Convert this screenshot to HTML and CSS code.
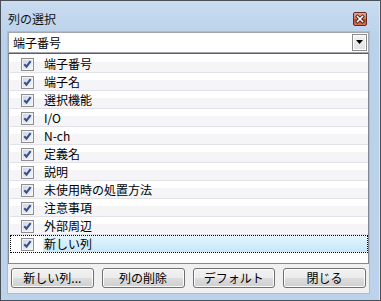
FILE: index.html
```html
<!DOCTYPE html>
<html lang="ja">
<head>
    <meta charset="UTF-8">
    <title>列の選択</title>
    <link rel="stylesheet" href="styles.css">
</head>
<body>
    <div class="window">
        <div class="titlebar">
            <span class="title">列の選択</span>
            <span class="close">
                <svg width="14" height="14" viewBox="0 0 14 14">
                    <path d="M4.5 4.5 L9.5 9.5 M9.5 4.5 L4.5 9.5" stroke="#3a1a14" stroke-width="3.2" stroke-linecap="square"/>
                    <path d="M4.5 4.5 L9.5 9.5 M9.5 4.5 L4.5 9.5" stroke="#fff" stroke-width="1.6" stroke-linecap="square"/>
                </svg>
            </span>
        </div>

        <div class="client">
            <div class="combo">
                <span class="combo-text">端子番号</span>
                <span class="drop">
                    <svg width="8" height="5" viewBox="0 0 8 5"><path d="M0 0 H7 L3.5 4 Z" fill="#000"/></svg>
                </span>
            </div>

            <ul class="list">
                <li class="row"><span class="check"></span><span class="label">端子番号</span></li>
                <li class="row"><span class="check"></span><span class="label">端子名</span></li>
                <li class="row"><span class="check"></span><span class="label">選択機能</span></li>
                <li class="row"><span class="check"></span><span class="label">I/O</span></li>
                <li class="row"><span class="check"></span><span class="label">N-ch</span></li>
                <li class="row"><span class="check"></span><span class="label">定義名</span></li>
                <li class="row"><span class="check"></span><span class="label">説明</span></li>
                <li class="row"><span class="check"></span><span class="label">未使用時の処置方法</span></li>
                <li class="row"><span class="check"></span><span class="label">注意事項</span></li>
                <li class="row"><span class="check"></span><span class="label">外部周辺</span></li>
                <li class="row selected"><span class="check"></span><span class="label">新しい列</span></li>
            </ul>

            <div class="buttons">
                <button class="btn">新しい列...</button>
                <button class="btn">列の削除</button>
                <button class="btn">デフォルト</button>
                <button class="btn">閉じる</button>
            </div>
        </div>
    </div>
</body>
</html>
```

FILE: styles.css
```css
body {
    margin: 0;
    font-family: "Noto Sans CJK JP", "Liberation Sans", sans-serif;
    font-size: 12px;
    color: #000;
}
.window {
    width: 381px;
    height: 301px;
    box-sizing: border-box;
    border: 1px solid #4a4f57;
    background: linear-gradient(#c9dcf0, #b9d1ea 40px, #bdd3eb);
    box-shadow: inset -4px 0 0 -3px #d8e6f5;
}
.titlebar {
    height: 30px;
    display: flex;
    justify-content: space-between;
    align-items: flex-start;
}
.title {
    padding: 11px 0 0 7px;
    line-height: 14px;
    color: #111;
}
.close {
    margin: 11px 13px 0 0;
    width: 14px;
    height: 14px;
    box-sizing: border-box;
    border: 1px solid #6b2a1f;
    border-radius: 2px;
    background: linear-gradient(#e7a796, #d5725c 50%, #c2452c 51%, #d4704f);
    display: flex;
    align-items: center;
    justify-content: center;
}
.close svg {
    margin: -1px;
}
.client {
    margin: 0 11px 0 7px;
    height: 261px;
    background: #f0f0f0;
    box-shadow: 0 0 0 1px #a7bdd6;
}
.combo {
    margin-top: 1px;
    height: 21px;
    box-sizing: border-box;
    border: 1px solid #a3a6ad;
    background: #fff;
    display: flex;
    align-items: center;
    justify-content: space-between;
}
.combo-text {
    padding-left: 4px;
    line-height: 14px;
}
.drop {
    margin-right: 1px;
    width: 15px;
    height: 17px;
    box-sizing: border-box;
    border: 1px solid #8a8a8a;
    box-shadow: inset 0 0 0 1px #fff;
    background: linear-gradient(#f4f4f4, #e2e2e2);
    display: flex;
    align-items: center;
    justify-content: center;
}
.list {
    list-style: none;
    margin: 0;
    height: 211px;
    box-sizing: border-box;
    padding: 1px 0 10px 1px;
    border: 1px solid #828790;
    border-top-color: #5b5e63;
    background: #fff;
}
.row {
    height: 18px;
    box-sizing: border-box;
    display: flex;
    align-items: stretch;
    border-bottom: 1px solid #e2e1ea;
    background: linear-gradient(#fff 7px, #f5f5f7 7px);
}
.check {
    margin: 3px 9px 0 11px;
    width: 13px;
    height: 13px;
    box-sizing: border-box;
    border: 1px solid #8f8f8f;
    background:
        url("data:image/svg+xml,%3Csvg xmlns='http://www.w3.org/2000/svg' width='11' height='11'%3E%3Cpath d='M2.3 5.2 L4.5 7.6 L8.6 2.2' fill='none' stroke='%23354f94' stroke-width='2.1'/%3E%3C/svg%3E") center no-repeat,
        linear-gradient(135deg, #cfd4de, #f7f7f7);
    box-shadow: inset 0 0 0 1px #f4f4f4;
}
.label {
    flex: 1;
    padding-left: 1px;
    line-height: 17px;
}
.row.selected {
    border-bottom: 0;
    outline: 1px dotted #000;
    outline-offset: -1px;
    background: #fff;
}
.row.selected .label {
    background: linear-gradient(#e4f5fd, #c3e8f9);
    margin: 1px 1px 1px 0;
    line-height: 16px;
}
.buttons {
    display: grid;
    grid-template-columns: repeat(4, 1fr);
    gap: 8px;
    padding: 4px 3px;
}
.btn {
    height: 20px;
    padding: 0;
    font-family: "Noto Sans CJK JP", "Liberation Sans", sans-serif;
    font-size: 12px;
    line-height: 16px;
    color: #000;
    border: 1px solid #707070;
    border-radius: 3px;
    background: linear-gradient(#f2f2f2, #ebebeb 50%, #dddddd 51%, #cfcfcf);
    box-shadow: inset 0 0 0 1px #fcfcfc;
}
```
